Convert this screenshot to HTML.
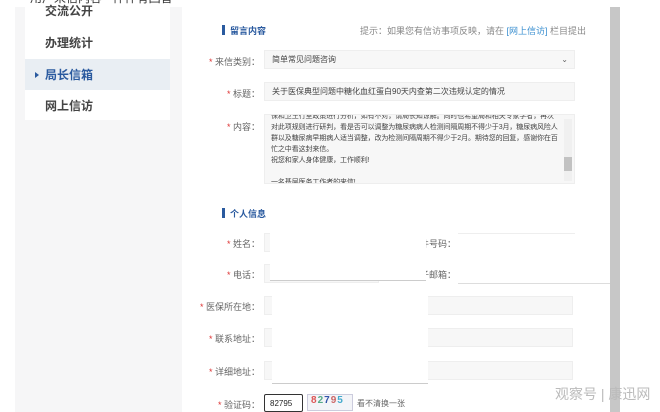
<!DOCTYPE html>
<html><head><meta charset="utf-8"><style>
*{margin:0;padding:0;box-sizing:border-box}
body{width:660px;height:412px;overflow:hidden;background:#fff;position:relative;font-family:"Liberation Sans","Noto Sans CJK SC",sans-serif;color:#555}
.a{position:absolute}
.gray{left:15px;top:7px;width:167px;height:405px;background:#f6f6f7}
.side{left:25px;top:7px;width:145px;height:113px;background:#fff}
.mi{position:absolute;left:20px;font-size:12px;line-height:14px;color:#444;font-weight:bold}
.lab{position:absolute;font-size:9px;color:#666;text-align:right;width:80px;left:180px}
.lab b{color:#d33;font-weight:normal}
.inp{position:absolute;background:#f7f7f7;border:1px solid #eee;font-size:8px;color:#444;padding-left:7px;line-height:17px;white-space:nowrap;overflow:hidden}
.hd{position:absolute;left:222px;font-size:9px;color:#2a5a9f;font-weight:bold}
.hd:before{content:"";display:inline-block;width:3px;height:10px;background:#2a5a9f;margin-right:5px;vertical-align:-1px}
.w{position:absolute;background:#fff}
</style></head><body>
<div class="a" style="left:30px;top:-11px;font-size:12px;color:#333">用户来信内容 · 件件有回音</div>
<div class="a gray"></div>
<div class="a side">
<div class="mi" style="top:-3px">交流公开</div>
<div class="mi" style="top:29px">办理统计</div>
<div style="position:absolute;left:0;top:52px;width:145px;height:31px;background:#e9eef3"></div>
<div style="position:absolute;left:10px;top:65px;width:0;height:0;border-left:4px solid #2a5a9f;border-top:3px solid transparent;border-bottom:3px solid transparent"></div>
<div class="mi" style="top:61px;color:#2a5a9f">局长信箱</div>
<div class="mi" style="top:92px">网上信访</div>
</div>
<div class="hd" style="top:24px">留言内容</div>
<div class="a" style="left:360px;top:24px;font-size:9px;color:#888">提示：如果您有信访事项反映，请在 <span style="color:#3a8fd0">[网上信访]</span> 栏目提出</div>
<div class="lab" style="top:55px"><b>*</b> 来信类别：</div>
<div class="inp" style="left:264px;top:50px;width:311px;height:19px">简单常见问题咨询<span style="position:absolute;right:6px;top:0;color:#666">⌄</span></div>
<div class="lab" style="top:87px"><b>*</b> 标题：</div>
<div class="inp" style="left:264px;top:82px;width:311px;height:19px">关于医保典型问题中糖化血红蛋白90天内查第二次违规认定的情况</div>
<div class="lab" style="top:120px"><b>*</b> 内容：</div>
<div class="inp" style="left:264px;top:114px;width:311px;height:70px;line-height:11px;white-space:normal;padding:0 16px 0 6px;font-size:7px;letter-spacing:-0.1px">
<div style="margin-top:-4px">保和卫生行室政策进行分析，如有不对，请局长知谅解。同时也希望局和相关专家学者，再次对此项规则进行研判，看是否可以调整为糖尿病病人检测间隔周期不得少于3月，糖尿病风险人群以及糖尿病早期病人适当调整，改为检测间隔周期不得少于2月。期待您的回复，感谢你在百忙之中看这封来信。<br>祝您和家人身体健康，工作顺利!<br><br>一名基层医务工作者的来信!</div>
<div style="position:absolute;right:2px;top:4px;width:8px;height:62px;background:#f0f0f0"><div style="position:absolute;top:38px;width:8px;height:14px;background:#c2c2c2"></div></div>
</div>
<div class="hd" style="top:207px">个人信息</div>
<div class="lab" style="top:237px"><b>*</b> 姓名：</div>
<div class="inp" style="left:264px;top:233px;width:115px;height:19px"></div>
<div class="a" style="left:420px;top:237px;font-size:9px;color:#666">件号码：</div>
<div class="inp" style="left:458px;top:233px;width:117px;height:19px"></div>
<div class="lab" style="top:268px"><b>*</b> 电话：</div>
<div class="inp" style="left:264px;top:264px;width:115px;height:19px"></div>
<div class="a" style="left:420px;top:268px;font-size:9px;color:#666">子邮箱：</div>
<div class="inp" style="left:458px;top:264px;width:117px;height:19px"></div>
<div class="lab" style="top:300px"><b>*</b> 医保所在地：</div>
<div class="inp" style="left:264px;top:296px;width:309px;height:19px"></div>
<div class="lab" style="top:332px"><b>*</b> 联系地址：</div>
<div class="inp" style="left:264px;top:328px;width:309px;height:19px"></div>
<div class="lab" style="top:365px"><b>*</b> 详细地址：</div>
<div class="inp" style="left:264px;top:361px;width:309px;height:19px"></div>
<div class="w" style="left:270px;top:232px;width:156px;height:49px;border-bottom:1px solid #ccc"></div>
<div class="w" style="left:458px;top:234px;width:154px;height:50px;border-bottom:1px solid #ddd"></div>
<div class="w" style="left:272px;top:295px;width:156px;height:89px;border-bottom:1px solid #ccc"></div>
<div class="lab" style="top:398px"><b>*</b> 验证码：</div>
<div class="a" style="left:264px;top:394px;width:39px;height:18px;border:1px solid #333;border-radius:2px;font-size:8px;color:#222;padding:4px 0 0 5px">82795</div>
<div class="a" style="left:307px;top:394px;width:46px;height:17px;border:1px solid #ccd;background:#f3f4f8;font-size:10px;font-weight:bold;padding-left:3px;letter-spacing:1px"><span style="color:#d55">8</span><span style="color:#5a8">2</span><span style="color:#35a">7</span><span style="color:#c66">9</span><span style="color:#4ac">5</span></div>
<div class="a" style="left:357px;top:398px;font-size:8px;color:#666">看不清换一张</div>
<div class="a" style="left:610px;top:7px;width:10px;height:405px;background:#c7c7c7"></div>
<div class="a" style="left:555px;top:384px;font-size:14px;color:#bbb">观察号 | 康迅网</div>
</body></html>
